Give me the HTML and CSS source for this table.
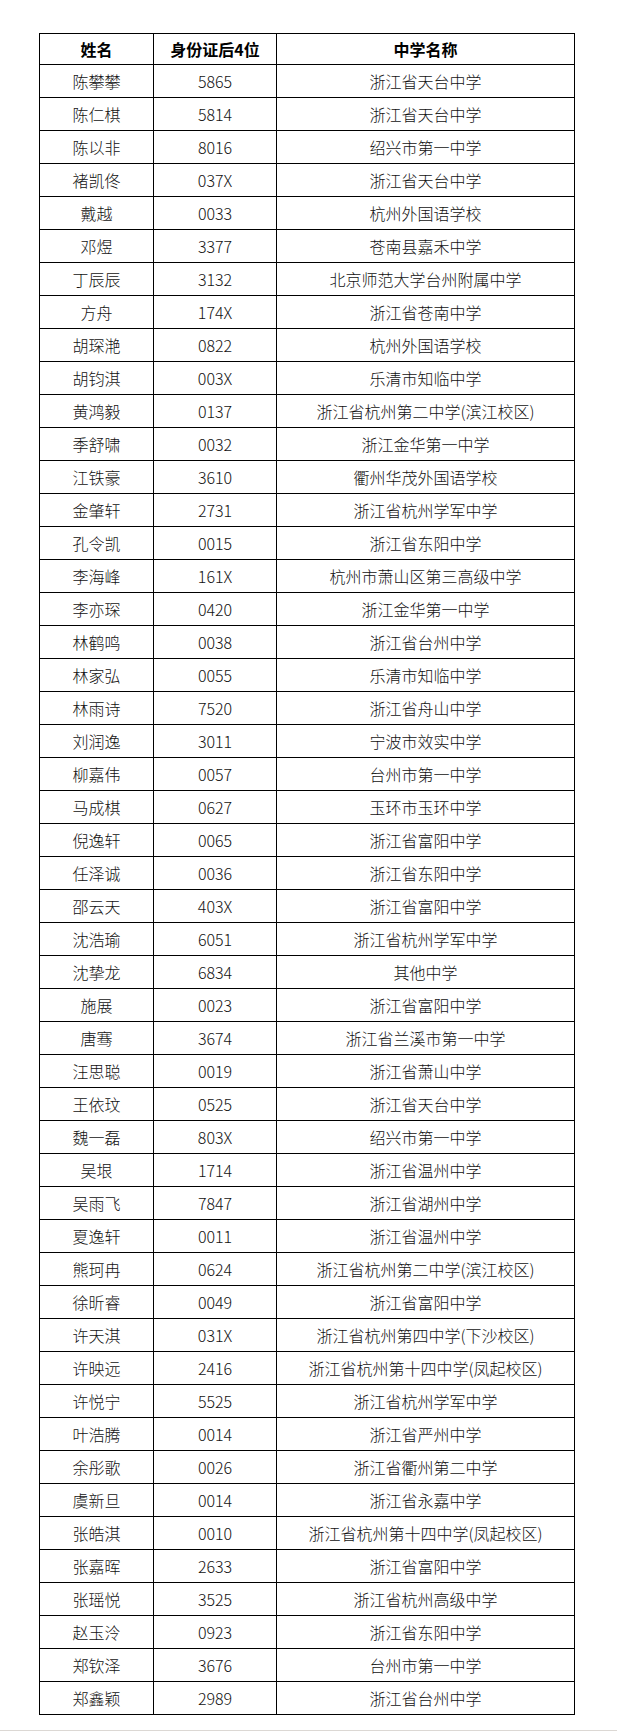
FILE: index.html
```html
<!DOCTYPE html>
<html lang="zh-CN">
<head>
<meta charset="utf-8">
<title>名单</title>
<link rel="stylesheet" href="styles.css">
</head>
<body>
<div class="page">
<table class="list">
<colgroup><col class="c1"><col class="c2"><col class="c3"></colgroup>
<thead>
<tr><th>姓名</th><th>身份证后4位</th><th>中学名称</th></tr>
</thead>
<tbody>
<tr><td>陈攀攀</td><td>5865</td><td>浙江省天台中学</td></tr>
<tr><td>陈仁棋</td><td>5814</td><td>浙江省天台中学</td></tr>
<tr><td>陈以非</td><td>8016</td><td>绍兴市第一中学</td></tr>
<tr><td>褚凯佟</td><td>037X</td><td>浙江省天台中学</td></tr>
<tr><td>戴越</td><td>0033</td><td>杭州外国语学校</td></tr>
<tr><td>邓煜</td><td>3377</td><td>苍南县嘉禾中学</td></tr>
<tr><td>丁辰辰</td><td>3132</td><td>北京师范大学台州附属中学</td></tr>
<tr><td>方舟</td><td>174X</td><td>浙江省苍南中学</td></tr>
<tr><td>胡琛滟</td><td>0822</td><td>杭州外国语学校</td></tr>
<tr><td>胡钧淇</td><td>003X</td><td>乐清市知临中学</td></tr>
<tr><td>黄鸿毅</td><td>0137</td><td>浙江省杭州第二中学(滨江校区)</td></tr>
<tr><td>季舒啸</td><td>0032</td><td>浙江金华第一中学</td></tr>
<tr><td>江铁豪</td><td>3610</td><td>衢州华茂外国语学校</td></tr>
<tr><td>金肇轩</td><td>2731</td><td>浙江省杭州学军中学</td></tr>
<tr><td>孔令凯</td><td>0015</td><td>浙江省东阳中学</td></tr>
<tr><td>李海峰</td><td>161X</td><td>杭州市萧山区第三高级中学</td></tr>
<tr><td>李亦琛</td><td>0420</td><td>浙江金华第一中学</td></tr>
<tr><td>林鹤鸣</td><td>0038</td><td>浙江省台州中学</td></tr>
<tr><td>林家弘</td><td>0055</td><td>乐清市知临中学</td></tr>
<tr><td>林雨诗</td><td>7520</td><td>浙江省舟山中学</td></tr>
<tr><td>刘润逸</td><td>3011</td><td>宁波市效实中学</td></tr>
<tr><td>柳嘉伟</td><td>0057</td><td>台州市第一中学</td></tr>
<tr><td>马成棋</td><td>0627</td><td>玉环市玉环中学</td></tr>
<tr><td>倪逸轩</td><td>0065</td><td>浙江省富阳中学</td></tr>
<tr><td>任泽诚</td><td>0036</td><td>浙江省东阳中学</td></tr>
<tr><td>邵云天</td><td>403X</td><td>浙江省富阳中学</td></tr>
<tr><td>沈浩瑜</td><td>6051</td><td>浙江省杭州学军中学</td></tr>
<tr><td>沈挚龙</td><td>6834</td><td>其他中学</td></tr>
<tr><td>施展</td><td>0023</td><td>浙江省富阳中学</td></tr>
<tr><td>唐骞</td><td>3674</td><td>浙江省兰溪市第一中学</td></tr>
<tr><td>汪思聪</td><td>0019</td><td>浙江省萧山中学</td></tr>
<tr><td>王依玟</td><td>0525</td><td>浙江省天台中学</td></tr>
<tr><td>魏一磊</td><td>803X</td><td>绍兴市第一中学</td></tr>
<tr><td>吴垠</td><td>1714</td><td>浙江省温州中学</td></tr>
<tr><td>吴雨飞</td><td>7847</td><td>浙江省湖州中学</td></tr>
<tr><td>夏逸轩</td><td>0011</td><td>浙江省温州中学</td></tr>
<tr><td>熊珂冉</td><td>0624</td><td>浙江省杭州第二中学(滨江校区)</td></tr>
<tr><td>徐昕睿</td><td>0049</td><td>浙江省富阳中学</td></tr>
<tr><td>许天淇</td><td>031X</td><td>浙江省杭州第四中学(下沙校区)</td></tr>
<tr><td>许映远</td><td>2416</td><td>浙江省杭州第十四中学(凤起校区)</td></tr>
<tr><td>许悦宁</td><td>5525</td><td>浙江省杭州学军中学</td></tr>
<tr><td>叶浩腾</td><td>0014</td><td>浙江省严州中学</td></tr>
<tr><td>余彤歌</td><td>0026</td><td>浙江省衢州第二中学</td></tr>
<tr><td>虞新旦</td><td>0014</td><td>浙江省永嘉中学</td></tr>
<tr><td>张皓淇</td><td>0010</td><td>浙江省杭州第十四中学(凤起校区)</td></tr>
<tr><td>张嘉晖</td><td>2633</td><td>浙江省富阳中学</td></tr>
<tr><td>张瑶悦</td><td>3525</td><td>浙江省杭州高级中学</td></tr>
<tr><td>赵玉泠</td><td>0923</td><td>浙江省东阳中学</td></tr>
<tr><td>郑钦泽</td><td>3676</td><td>台州市第一中学</td></tr>
<tr><td>郑鑫颖</td><td>2989</td><td>浙江省台州中学</td></tr>
</tbody>
</table>
<div class="rule"></div>
</div>
</body>
</html>
```
FILE: styles.css
```css
html, body {
  margin: 0;
  padding: 0;
  background: #ffffff;
}
.page {
  padding-top: 33px;
  padding-left: 39px;
  width: 617px;
  box-sizing: border-box;
}
.list {
  border-collapse: collapse;
  table-layout: fixed;
  width: 535px;
  font-family: "Noto Sans CJK SC", "Noto Sans", sans-serif;
  font-size: 16px;
  color: #111;
}
.c1 { width: 114px; }
.c2 { width: 123px; }
.c3 { width: 298px; }
.list th,
.list td {
  border: 1px solid #000;
  padding: 0;
  text-align: center;
  vertical-align: middle;
  line-height: 18px;
  white-space: nowrap;
}
.list th {
  font-weight: 700;
  color: #000;
}
.list thead tr { height: 31px; }
.list tbody tr { height: 33px; }
.list td { font-weight: 300; }
.rule {
  margin-top: 15px;
  margin-left: -39px;
  height: 2px;
  background: #dcd8d4;
}
```
